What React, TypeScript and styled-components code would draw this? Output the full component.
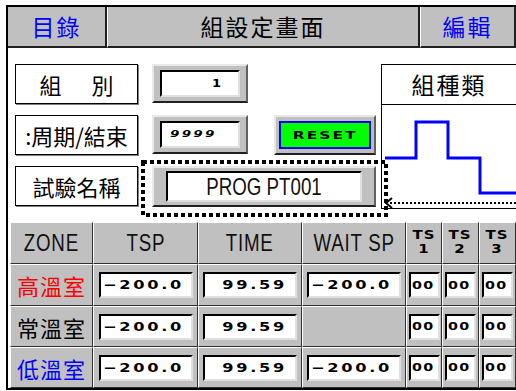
import React from "react";
import styled, { createGlobalStyle } from "styled-components";

const Global = createGlobalStyle`
  html, body { margin: 0; padding: 0; background: #fff; overflow: hidden; }
  body { width: 516px; height: 391px; }
`;

const GRAY = "#c0c0c0";

const Frame = styled.div`
  margin: 5px 0 0 6px;
  width: 508px;
  height: 381px;
  border: 2px solid #000;
  background: #fff;
  display: flex;
  flex-direction: column;
  font-family: "Noto Sans CJK TC", "Noto Sans CJK SC", sans-serif;
`;

const Header = styled.div`
  display: grid;
  grid-template-columns: 99px 313px 96px;
  height: 41px;
`;

const HeaderCell = styled.div<{ $color: string; $first?: boolean }>`
  background: ${GRAY};
  border-left: ${(p) => (p.$first ? "0" : "1px solid #fff")};
  border-right: 2px solid #202020;
  border-bottom: 2px solid #202020;
  color: ${(p) => p.$color};
  font-size: 23px;
  letter-spacing: 2px;
  display: flex;
  align-items: center;
  justify-content: center;
  line-height: 1;
`;

const Middle = styled.div`
  height: 174px;
  display: flex;
  padding: 16px 0 0 7px;
  box-sizing: border-box;
`;

const LeftArea = styled.div`
  display: flex;
  flex-direction: column;
  gap: 11px;
  width: 367px;
`;

const Row = styled.div`
  display: flex;
  align-items: flex-start;
  gap: 14px;
`;

const Label = styled.div<{ $spaced?: boolean }>`
  width: 121px;
  height: 38px;
  border: 1px solid #000;
  box-shadow: 1px 1px 0 #808080;
  display: flex;
  align-items: center;
  justify-content: center;
  gap: ${(p) => (p.$spaced ? "30px" : "0")};
  font-size: 22px;
  line-height: 1;
  color: #000;
  overflow: hidden;
  white-space: nowrap;
`;

const Raised = styled.div<{ $w: number; $h: number }>`
  width: ${(p) => p.$w}px;
  height: ${(p) => p.$h}px;
  box-sizing: border-box;
  background: ${GRAY};
  border-top: 2px solid #e8e8e8;
  border-left: 2px solid #e8e8e8;
  border-right: 2px solid #606060;
  border-bottom: 2px solid #202020;
  display: flex;
  align-items: center;
  justify-content: center;
`;

const Inset = styled.div<{ $w: number; $h: number; $align?: string; $pad?: string }>`
  width: ${(p) => p.$w}px;
  height: ${(p) => p.$h}px;
  box-sizing: border-box;
  background: #fff;
  border-top: 2px solid #000;
  border-left: 2px solid #000;
  border-right: 2px solid #e0e0e0;
  border-bottom: 2px solid #e0e0e0;
  display: flex;
  align-items: center;
  justify-content: ${(p) => p.$align ?? "flex-start"};
  padding: ${(p) => p.$pad ?? "0 2px"};
`;

const Pix = styled.span<{
  $size?: number;
  $sp?: number;
  $sx?: number;
  $italic?: boolean;
  $origin?: string;
}>`
  display: inline-block;
  font-family: "DejaVu Sans", "Liberation Sans", sans-serif;
  font-weight: bold;
  font-size: ${(p) => p.$size ?? 12}px;
  letter-spacing: ${(p) => p.$sp ?? 2}px;
  font-style: ${(p) => (p.$italic ? "italic" : "normal")};
  transform: scaleX(${(p) => p.$sx ?? 1.35});
  transform-origin: ${(p) => p.$origin ?? "left"} center;
  line-height: 1;
  color: #000;
  white-space: nowrap;
`;

const Narrow = styled.span<{ $size?: number }>`
  display: inline-block;
  font-family: "Liberation Sans", sans-serif;
  font-size: ${(p) => p.$size ?? 24}px;
  transform: scaleX(0.78);
  line-height: 1;
  color: #111;
  white-space: nowrap;
`;

const ResetBtn = styled.div`
  width: 102px;
  height: 40px;
  box-sizing: border-box;
  background: ${GRAY};
  border-top: 2px solid #e8e8e8;
  border-left: 2px solid #e8e8e8;
  border-right: 2px solid #606060;
  border-bottom: 2px solid #202020;
  padding: 4px 3px;
  display: flex;
  margin-left: 12px;
`;

const ResetFace = styled.div`
  flex: 1;
  background: #00ff00;
  border: 2px solid #0000ff;
  display: flex;
  align-items: center;
  justify-content: center;
`;

const FocusWrap = styled.div`
  position: relative;
`;

const FocusRing = styled.svg`
  position: absolute;
  left: -11px;
  top: -6px;
  width: 247px;
  height: 57px;
  pointer-events: none;
`;

const ChartBox = styled.div`
  width: 134px;
  height: 143px;
  border-left: 1px solid #000;
  border-top: 1px solid #000;
  border-bottom: 1px solid #000;
  display: flex;
  flex-direction: column;
`;

const ChartTitle = styled.div`
  height: 39px;
  border-bottom: 1px solid #000;
  display: flex;
  align-items: center;
  justify-content: center;
  font-size: 23px;
  letter-spacing: 2px;
  line-height: 1;
`;

const ChartBody = styled.svg`
  flex: 1;
  width: 134px;
`;

const Table = styled.div`
  display: grid;
  grid-template-columns: 83px 105px 104px 104px 36px 37px 37px;
  grid-template-rows: 42px 42px 41px 41px;
  margin-left: 2px;
  height: 166px;
  background: #000;
`;

const Cell = styled.div<{ $color?: string }>`
  background: ${GRAY};
  border-top: 1px solid #fff;
  border-left: 1px solid #fff;
  border-right: 1px solid #303030;
  border-bottom: 1px solid #303030;
  display: flex;
  align-items: center;
  justify-content: center;
  color: ${(p) => p.$color ?? "#000"};
  font-size: 22px;
  line-height: 1;
  letter-spacing: 1px;
  overflow: hidden;
`;

const TsHead = styled.div`
  display: flex;
  flex-direction: column;
  align-items: center;
  gap: 1px;
  margin-top: -3px;
  font-family: "DejaVu Sans", sans-serif;
  font-weight: bold;
  font-size: 13px;
  letter-spacing: 1px;
  line-height: 1;
  color: #000;
`;

const TsLine = styled.span`
  display: block;
  transform: scaleX(1.15);
`;

const zones = [
  { name: "高溫室", color: "#ff0000", wait: true },
  { name: "常溫室", color: "#000000", wait: false },
  { name: "低溫室", color: "#0000ff", wait: true },
];

export default function App() {
  return (
    <>
      <Global />
      <Frame>
        <Header>
          <HeaderCell $color="#0000ff" $first>目錄</HeaderCell>
          <HeaderCell $color="#000">組設定畫面</HeaderCell>
          <HeaderCell $color="#0000ff">編輯</HeaderCell>
        </Header>
        <Middle>
          <LeftArea>
            <Row>
              <Label $spaced>
                <span>組</span>
                <span>別</span>
              </Label>
              <Raised $w={96} $h={39}>
                <Inset $w={80} $h={27} $align="flex-end" $pad="0 17px 0 2px">
                  <Pix $size={10} $sp={0} $sx={1.3} $origin="right">1</Pix>
                </Inset>
              </Raised>
            </Row>
            <Row>
              <Label>:周期/結束</Label>
              <Raised $w={96} $h={39}>
                <Inset $w={80} $h={27} $pad="0 0 0 8px">
                  <Pix $size={9} $sp={1.5} $sx={1.5} $italic>9999</Pix>
                </Inset>
              </Raised>
              <ResetBtn>
                <ResetFace>
                  <Pix $size={11} $sp={1.5} $sx={1.4} $origin="center">RESET</Pix>
                </ResetFace>
              </ResetBtn>
            </Row>
            <Row>
              <Label>試驗名稱</Label>
              <FocusWrap>
                <Raised $w={224} $h={41}>
                  <Inset $w={196} $h={31} $align="center">
                    <Narrow $size={24}>PROG PT001</Narrow>
                  </Inset>
                </Raised>
                <FocusRing viewBox="0 0 247 57">
                  <rect
                    x="2"
                    y="2"
                    width="243"
                    height="53"
                    fill="none"
                    stroke="#000"
                    strokeWidth="4"
                    strokeDasharray="4 3"
                  />
                </FocusRing>
              </FocusWrap>
            </Row>
          </LeftArea>
          <ChartBox>
            <ChartTitle>組種類</ChartTitle>
            <ChartBody viewBox="0 0 134 103">
              <polyline
                points="3,53 34,53 34,17 66,17 66,53 98,53 98,88 134,88"
                fill="none"
                stroke="#0000ff"
                strokeWidth="3"
              />
              <line x1="8" y1="98" x2="134" y2="98" stroke="#000" strokeWidth="2" strokeDasharray="2 2" />
              <polyline points="10,93 4,98 10,103" fill="none" stroke="#000" strokeWidth="2" />
            </ChartBody>
          </ChartBox>
        </Middle>
        <Table>
          <Cell><Narrow>ZONE</Narrow></Cell>
          <Cell><Narrow>TSP</Narrow></Cell>
          <Cell><Narrow>TIME</Narrow></Cell>
          <Cell><Narrow>WAIT SP</Narrow></Cell>
          {[1, 2, 3].map((n) => (
            <Cell key={n}>
              <TsHead>
                <TsLine>TS</TsLine>
                <TsLine>{n}</TsLine>
              </TsHead>
            </Cell>
          ))}
          {zones.map((z) => (
            <React.Fragment key={z.name}>
              <Cell $color={z.color}>{z.name}</Cell>
              <Cell>
                <Inset $w={94} $h={26}>
                  <Pix $size={12} $sp={2} $sx={1.35}>−200.0</Pix>
                </Inset>
              </Cell>
              <Cell>
                <Inset $w={94} $h={26} $align="flex-end" $pad="0 8px 0 2px">
                  <Pix $size={12} $sp={2} $sx={1.35} $origin="right">99.59</Pix>
                </Inset>
              </Cell>
              <Cell>
                {z.wait && (
                  <Inset $w={94} $h={26}>
                    <Pix $size={12} $sp={2} $sx={1.35}>−200.0</Pix>
                  </Inset>
                )}
              </Cell>
              {[1, 2, 3].map((n) => (
                <Cell key={n}>
                  <Inset $w={31} $h={26} $pad="0 1px">
                    <Pix $size={11} $sp={1} $sx={1.3}>00</Pix>
                  </Inset>
                </Cell>
              ))}
            </React.Fragment>
          ))}
        </Table>
      </Frame>
    </>
  );
}
